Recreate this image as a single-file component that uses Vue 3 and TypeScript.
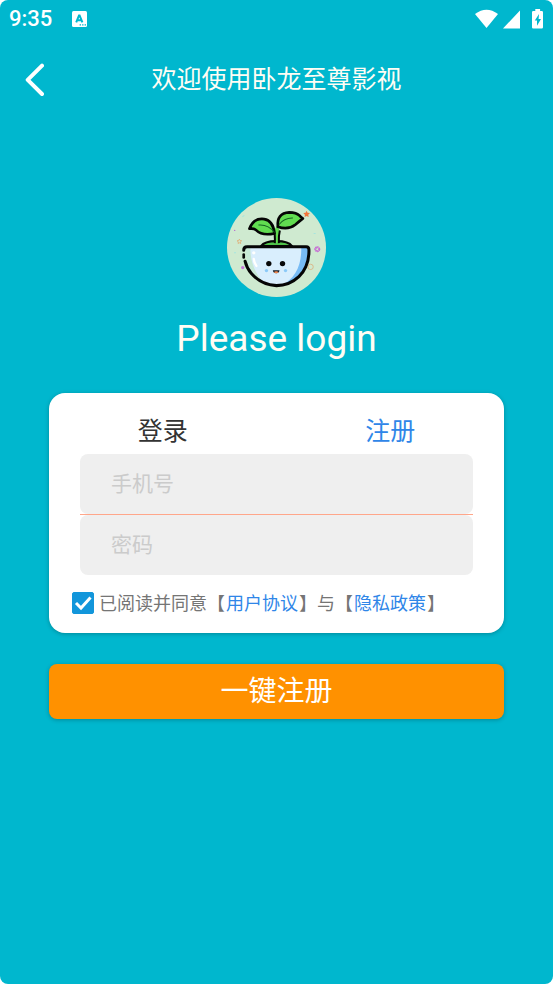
<script setup lang="ts">
import { ref } from 'vue'

type Tab = 'login' | 'register'

const tabs: { key: Tab; label: string }[] = [
  { key: 'login', label: '登录' },
  { key: 'register', label: '注册' },
]
const active = ref<Tab>('register')
const phone = ref('')
const password = ref('')
const agreed = ref(true)
</script>

<template>
  <div class="page">
    <div class="status">
      <span class="clock">9:35</span>
      <svg class="app-icon" viewBox="0 0 15 16" aria-hidden="true">
        <rect width="15" height="16" rx="1.5" fill="#fff" />
        <path d="M4.2 11.4 7 4.4h.6l2.8 7M5.2 9.2h4.2" fill="none" stroke="#00b7ce" stroke-width="2" />
        <path d="M7.6 13.2h1.4v1.3H7.6zM10.1 13.2h1.4v1.3h-1.4zM12.6 13.2H14v1.3h-1.4z" fill="#00b7ce" />
      </svg>
      <svg class="signals" viewBox="0 0 70 20" aria-hidden="true">
        <path d="M1 5Q12.5-3.5 24 5L12.5 19z" fill="#fff" />
        <path d="M46 1.5V19.5H29z" fill="#fff" />
        <path d="M61.3 0h4.8v2h1.7q1.2 0 1.2 1.2v15.1q0 1.2-1.2 1.2h-8.6q-1.2 0-1.2-1.2V3.2Q58 2 59.2 2h2.1z" fill="#fff" />
        <path d="M65 5 60.8 11.5h2.2v5.2l4-6.7h-2.4z" fill="#00b7ce" />
      </svg>
    </div>

    <header class="bar">
      <button class="back" type="button" aria-label="返回">
        <svg viewBox="0 0 20 34" aria-hidden="true">
          <path d="M18 2.7 3.7 16.8 18 31" />
        </svg>
      </button>
      <h1>欢迎使用卧龙至尊影视</h1>
    </header>

    <main>
      <svg class="logo" viewBox="30 24 296 296" aria-hidden="true">
        <circle cx="178" cy="172" r="148" fill="#cfead0" />
        <path d="M132 168q10-15 46-15t46 15z" fill="#4fc24a" stroke="#050505" stroke-width="7" />
        <path d="M88 171H274Q277 226 245 257 212 286 178 286 126 282 103 247 88 223 88 171z" fill="#d9eefd" />
        <path d="M86 172h14q-1 62 40 105Q86 250 86 172z" fill="#c8e9d6" />
        <path d="M252 172h24q2 57-32 88-28 25-52 26 62-31 60-114z" fill="#77bbf5" />
        <path d="M80 180q0-10 10-10H267q8 0 8 9 1 50-30 80-29 27-67 27-45-2-75-36-14-16-19-37" fill="none" stroke="#050505" stroke-width="9" stroke-linecap="round" />
        <path d="M80 193v9" stroke="#050505" stroke-width="8" stroke-linecap="round" />
        <path d="M110 206q1 12 8 21" fill="none" stroke="#fff" stroke-width="7" stroke-linecap="round" />
        <circle cx="110" cy="188" r="5" fill="#fff" />
        <path d="M173 159q1-29-3-37l9-15 9 14q-4 15-3 38z" fill="#61dd50" />
        <path d="M173 159q1-29-3-37M185 159q-1-23 3-38" fill="none" stroke="#050505" stroke-width="6" />
        <path d="M97 116q12-33 44-29 27 4 31 43-37 8-55-10-6-6-20-4z" fill="#61dd50" stroke="#050505" stroke-width="8" stroke-linejoin="round" />
        <path d="M182 110q-4-41 34-43 22 0 31 10 5 6 10 8-12 10-23 19-22 17-52 6z" fill="#61dd50" stroke="#050505" stroke-width="8" stroke-linejoin="round" />
        <path d="M124 105q29-3 48 22M185 104q16-21 42-20" fill="none" stroke="#156422" stroke-width="3" />
        <circle cx="155" cy="220" r="8" fill="#080808" />
        <circle cx="196" cy="220" r="8" fill="#080808" />
        <circle cx="148" cy="241" r="5" fill="#8ccaf8" />
        <circle cx="205" cy="241" r="5" fill="#8ccaf8" />
        <path d="M167 240h20q-1 9-10 9t-10-9z" fill="#17202b" />
        <ellipse cx="177" cy="246" rx="6" ry="3" fill="#f38a50" />
        <path d="m268 62 3 6 7 1-5 5 1 7-6-3-6 3 1-7-5-5 7-1z" fill="#f2753b" />
        <path d="m67 147 2 4 5 1-4 3 1 5-4-2-4 2 1-5-4-3 5-1z" fill="none" stroke="#e6a364" stroke-width="2" />
        <circle cx="300" cy="177" r="6" fill="none" stroke="#c66ad4" stroke-width="6" stroke-dasharray="4 1" />
        <circle cx="280" cy="230" r="8" fill="none" stroke="#dfa36c" stroke-width="2" />
        <circle cx="77" cy="232" r="5" fill="#c576d7" />
        <circle cx="53" cy="121" r="2" fill="#b86bd0" />
        <path d="M51 188h6M289 130h6M76 80l6-4" stroke="#a6e5df" stroke-width="3" />
      </svg>

      <h2>Please login</h2>

      <form @submit.prevent>
        <section class="card">
          <div class="tabs">
            <button
              v-for="tab in tabs"
              :key="tab.key"
              type="button"
              :class="{ active: active === tab.key }"
              @click="active = tab.key"
            >
              {{ tab.label }}
            </button>
          </div>
          <div class="fields">
            <input v-model="phone" type="tel" placeholder="手机号" aria-label="手机号" />
            <input v-model="password" type="password" placeholder="密码" aria-label="密码" />
          </div>
          <div class="agreement">
            <span class="check">
              <input id="agree" v-model="agreed" type="checkbox" />
              <svg v-if="agreed" viewBox="0 0 22 22" aria-hidden="true">
                <path d="M4 11 9 16 18.5 5.5" />
              </svg>
            </span>
            <p>
              <label for="agree">已阅读并同意</label>【<a href="#terms">用户协议</a>】与【<a href="#privacy">隐私政策</a>】
            </p>
          </div>
        </section>
        <button class="submit" type="submit">一键注册</button>
      </form>
    </main>
  </div>
</template>

<style>
body {
  background: #fff;
}
</style>

<style scoped>
* {
  box-sizing: border-box;
}

.page {
  display: flex;
  flex-direction: column;
  min-height: 100vh;
  border-radius: 8px;
  background: #00b7ce;
  color: #fff;
  font-family: Roboto, "Noto Sans CJK SC", sans-serif;
}

button,
input {
  margin: 0;
  border: 0;
  font-family: inherit;
}

button {
  padding: 0;
  background: none;
  cursor: pointer;
}

.status {
  display: flex;
  align-items: center;
  height: 38px;
  padding: 0 9px;
}

.clock {
  font-size: 22px;
  font-weight: 500;
  line-height: 24px;
}

.app-icon {
  width: 15px;
  height: 16px;
  margin-left: 20px;
}

.signals {
  width: 70px;
  height: 20px;
  margin-left: auto;
}

.bar {
  display: grid;
  grid-template-columns: 44px 1fr 44px;
  align-items: center;
  height: 84px;
  padding: 0 12px;
}

.back {
  display: flex;
  align-items: center;
  justify-content: center;
  height: 44px;
}

.back svg {
  width: 20px;
  height: 34px;
}

.back path {
  fill: none;
  stroke: #fff;
  stroke-width: 4;
  stroke-linecap: round;
  stroke-linejoin: round;
}

h1 {
  margin: 0;
  color: #fffdf4;
  font-size: 25px;
  font-weight: 400;
  line-height: 36px;
  text-align: center;
}

main {
  display: flex;
  flex-direction: column;
  align-items: center;
  padding: 76px 49px 0;
}

.logo {
  width: 99px;
  height: 99px;
}

h2 {
  margin: 20px 0 32px;
  color: #fffdf4;
  font-size: 37px;
  font-weight: 400;
  line-height: 44px;
}

form {
  display: flex;
  flex-direction: column;
  gap: 31px;
  width: 100%;
}

.card {
  padding: 12px 0 16px;
  border-radius: 16px;
  background: #fff;
  box-shadow: 0 1px 4px rgba(0, 0, 0, 0.25);
}

.tabs {
  display: grid;
  grid-template-columns: 1fr 1fr;
  padding-bottom: 2px;
}

.tabs button {
  height: 47px;
  color: #333;
  font-size: 25px;
  font-weight: 400;
}

.tabs .active {
  color: #2f86e8;
}

.fields {
  display: flex;
  flex-direction: column;
  margin: 0 31px;
  background: linear-gradient(#ffa68a, #ffa68a) 0 60px / 100% 1px no-repeat;
  gap: 1px;
}

.fields input {
  width: 100%;
  height: 60px;
  padding: 0 31px;
  border-radius: 8px;
  outline: 0;
  background: #efefef;
  color: #333;
  font-size: 21px;
  font-weight: 400;
}

.fields input::placeholder {
  color: #cbcbcb;
  opacity: 1;
}

.agreement {
  display: flex;
  align-items: center;
  gap: 5px;
  margin-top: 14px;
  padding: 0 23px;
}

.check {
  display: grid;
  flex: none;
}

.check input,
.check svg {
  grid-area: 1 / 1;
  width: 22px;
  height: 22px;
}

.check input {
  appearance: none;
  border: 1px solid #1296db;
  border-radius: 2px;
  cursor: pointer;
}

.check input:checked {
  background: #1296db;
}

.check svg {
  pointer-events: none;
}

.check path {
  fill: none;
  stroke: #fff;
  stroke-width: 3;
}

.agreement p {
  margin: 0;
  padding-top: 2px;
  color: #757575;
  font-size: 18px;
  font-weight: 400;
  line-height: 26px;
}

.agreement a {
  padding: 0 1px;
  color: #2f86e8;
  text-decoration: none;
}

.submit {
  height: 55px;
  border-radius: 8px;
  background: #ff9100;
  box-shadow: 0 1px 4px rgba(0, 0, 0, 0.25);
  color: #fff;
  font-size: 28px;
  font-weight: 400;
  line-height: 40px;
}
</style>
